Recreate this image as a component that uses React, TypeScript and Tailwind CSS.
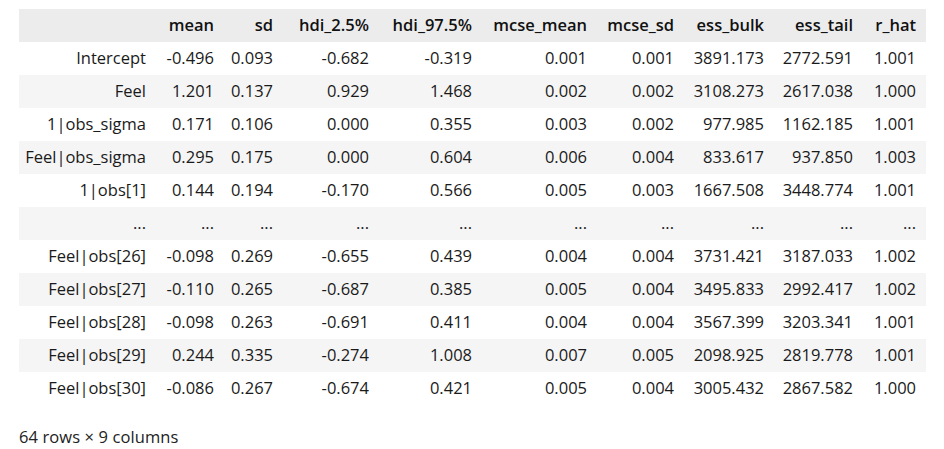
import React from "react";

const columns = [
  "mean",
  "sd",
  "hdi_2.5%",
  "hdi_97.5%",
  "mcse_mean",
  "mcse_sd",
  "ess_bulk",
  "ess_tail",
  "r_hat",
];

// column widths in px, index column first
const widths = [137, 68, 59, 96, 103, 115, 87, 90, 89, 63];

const rows: [string, string[]][] = [
  ["Intercept", ["-0.496", "0.093", "-0.682", "-0.319", "0.001", "0.001", "3891.173", "2772.591", "1.001"]],
  ["Feel", ["1.201", "0.137", "0.929", "1.468", "0.002", "0.002", "3108.273", "2617.038", "1.000"]],
  ["1|obs_sigma", ["0.171", "0.106", "0.000", "0.355", "0.003", "0.002", "977.985", "1162.185", "1.001"]],
  ["Feel|obs_sigma", ["0.295", "0.175", "0.000", "0.604", "0.006", "0.004", "833.617", "937.850", "1.003"]],
  ["1|obs[1]", ["0.144", "0.194", "-0.170", "0.566", "0.005", "0.003", "1667.508", "3448.774", "1.001"]],
  ["...", ["...", "...", "...", "...", "...", "...", "...", "...", "..."]],
  ["Feel|obs[26]", ["-0.098", "0.269", "-0.655", "0.439", "0.004", "0.004", "3731.421", "3187.033", "1.002"]],
  ["Feel|obs[27]", ["-0.110", "0.265", "-0.687", "0.385", "0.005", "0.004", "3495.833", "2992.417", "1.002"]],
  ["Feel|obs[28]", ["-0.098", "0.263", "-0.691", "0.411", "0.004", "0.004", "3567.399", "3203.341", "1.001"]],
  ["Feel|obs[29]", ["0.244", "0.335", "-0.274", "1.008", "0.007", "0.005", "2098.925", "2819.778", "1.001"]],
  ["Feel|obs[30]", ["-0.086", "0.267", "-0.674", "0.421", "0.005", "0.004", "3005.432", "2867.582", "1.000"]],
];

export default function App() {
  return (
    <div className="w-[944px] h-[449px] bg-white pt-[9px] pl-[19px] font-['Open_Sans','Noto_Sans',sans-serif] text-[16.5px] text-[#1a1a1a]">
      <table className="table-fixed border-collapse w-[907px]">
        <colgroup>
          {widths.map((w, i) => (
            <col key={i} style={{ width: w }} />
          ))}
        </colgroup>
        <thead>
          <tr className="h-[33px] bg-[#ececec]">
            <th className="pr-[10px]"></th>
            {columns.map((c) => (
              <th key={c} className="pr-[10px] text-right font-semibold text-[#111] whitespace-nowrap">
                {c}
              </th>
            ))}
          </tr>
        </thead>
        <tbody>
          {rows.map(([name, vals], i) => (
            <tr key={name} className={`h-[33px] ${i % 2 === 1 ? "bg-[#f5f5f5]" : "bg-white"}`}>
              <th className="pr-[10px] text-right font-normal whitespace-nowrap">{name}</th>
              {vals.map((v, j) => (
                <td key={j} className="pr-[10px] text-right whitespace-nowrap">
                  {v}
                </td>
              ))}
            </tr>
          ))}
        </tbody>
      </table>
      <div className="mt-[20px] text-[#222] tracking-[0.1px]">64 rows × 9 columns</div>
    </div>
  );
}
